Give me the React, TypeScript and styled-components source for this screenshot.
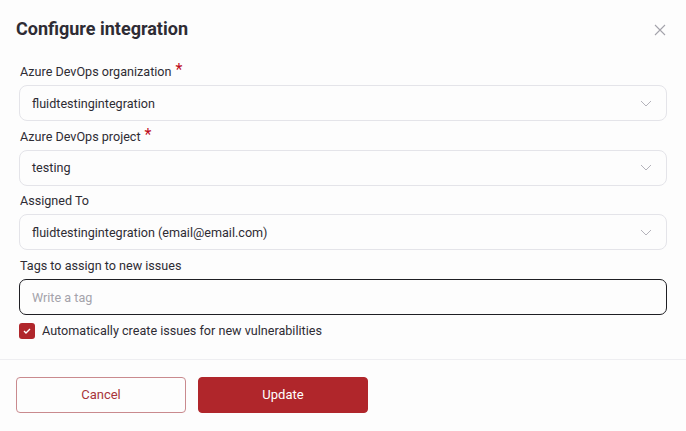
import styled, { createGlobalStyle } from "styled-components";

const GlobalStyle = createGlobalStyle`
	body {
		margin: 0;
		background: #fdfdfd;
		font-family: Roboto, "Liberation Sans", sans-serif;
		color: #2e2c34;
	}
	* {
		box-sizing: border-box;
	}
`;

const Modal = styled.div`
	width: 686px;
	height: 431px;
	background: #fdfdfd;
	display: flex;
	flex-direction: column;
`;

const Header = styled.div`
	display: flex;
	align-items: flex-start;
	justify-content: space-between;
	padding: 17px 20px 0 16px;
	height: 58px;
`;

const Title = styled.h1`
	margin: 0;
	font-size: 18px;
	line-height: 24px;
	font-weight: 700;
	color: #2e2c34;
`;

const CloseButton = styled.button`
	border: none;
	background: none;
	padding: 0;
	margin-top: 7px;
	width: 12px;
	height: 12px;
	display: flex;
	cursor: pointer;
`;

const Form = styled.div`
	display: flex;
	flex-direction: column;
	padding: 5px 19px 0 19px;
`;

const Field = styled.div`
	display: flex;
	flex-direction: column;
	gap: 4px;
	margin-bottom: 6.7px;
`;

const Label = styled.label`
	font-size: 12.6px;
	line-height: 18px;
	color: #2e2c34;
	padding-left: 1px;
`;

const Required = styled.span`
	color: #bf0b1a;
	font-size: 16px;
	margin-left: 4px;
	vertical-align: top;
	line-height: 13px;
`;

const SelectBox = styled.div`
	height: 36px;
	border: 1px solid #e4e4e9;
	border-radius: 8px;
	background: #fdfdfd;
	display: flex;
	align-items: center;
	justify-content: space-between;
	padding: 0 14px 0 12px;
	font-size: 12.6px;
	color: #2e2c34;
`;

const TagInput = styled.input`
	height: 36px;
	border: 1.5px solid #1f1f24;
	border-radius: 7px;
	background: #fdfdfd;
	padding: 0 12px;
	font-family: inherit;
	font-size: 12.6px;
	color: #2e2c34;
	outline: none;

	&::placeholder {
		color: #a4a3ab;
	}
`;

const CheckRow = styled.div`
	display: flex;
	align-items: center;
	gap: 7px;
	margin-top: 1px;
	font-size: 12.6px;
	color: #2e2c34;
`;

const CheckBox = styled.span`
	width: 16px;
	height: 16px;
	border-radius: 3px;
	background: #b0262b;
	display: flex;
	align-items: center;
	justify-content: center;
`;

const Divider = styled.div`
	height: 1px;
	background: #eeeef1;
	margin-top: 20px;
`;

const Footer = styled.div`
	display: flex;
	gap: 12px;
	padding: 17px 16px 0 16px;
`;

const Button = styled.button<{ $primary?: boolean }>`
	width: 170px;
	height: 36px;
	border-radius: 4px;
	font-family: inherit;
	font-size: 13px;
	cursor: pointer;
	border: 1px solid ${({ $primary }) => ($primary ? "#b0262b" : "#c98a8e")};
	background: ${({ $primary }) => ($primary ? "#b0262b" : "#fdfdfd")};
	color: ${({ $primary }) => ($primary ? "#ffffff" : "#a8343a")};
`;

const Chevron = () => (
	<svg width="12" height="7" viewBox="0 0 12 7" fill="none">
		<path d="M1 1l5 5 5-5" stroke="#b4b3bb" strokeWidth="1" />
	</svg>
);

const fields = [
	{ label: "Azure DevOps organization", value: "fluidtestingintegration", required: true },
	{ label: "Azure DevOps project", value: "testing", required: true },
	{ label: "Assigned To", value: "fluidtestingintegration (email@email.com)", required: false }
];

const App = () => (
	<>
		<GlobalStyle />
		<Modal>
			<Header>
				<Title>Configure integration</Title>
				<CloseButton aria-label="Close">
					<svg width="12" height="12" viewBox="0 0 12 12">
						<path d="M1 1l10 10M11 1L1 11" stroke="#a4a3ab" strokeWidth="1.1" />
					</svg>
				</CloseButton>
			</Header>
			<Form>
				{fields.map((field) => (
					<Field key={field.label}>
						<Label>
							{field.label}
							{field.required && <Required>*</Required>}
						</Label>
						<SelectBox>
							<span>{field.value}</span>
							<Chevron />
						</SelectBox>
					</Field>
				))}
				<Field>
					<Label>Tags to assign to new issues</Label>
					<TagInput placeholder="Write a tag" />
				</Field>
				<CheckRow>
					<CheckBox>
						<svg width="8" height="6" viewBox="0 0 8 6" fill="none">
							<path d="M1 3l2 2 4-4" stroke="#ffffff" strokeWidth="1.4" />
						</svg>
					</CheckBox>
					Automatically create issues for new vulnerabilities
				</CheckRow>
			</Form>
			<Divider />
			<Footer>
				<Button>Cancel</Button>
				<Button $primary>Update</Button>
			</Footer>
		</Modal>
	</>
);

export default App;
